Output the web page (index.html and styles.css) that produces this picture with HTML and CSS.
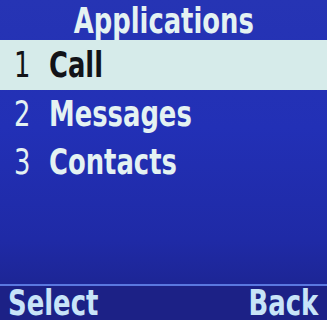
FILE: index.html
```html
<!DOCTYPE html>
<html>
<head>
<meta charset="utf-8">
<link rel="stylesheet" href="styles.css">
</head>
<body>
<div class="screen">
  <div class="title"><span class="txt">Applications</span></div>
  <ul class="menu">
    <li class="item selected"><span class="num">1</span><span class="label">Call</span></li>
    <li class="item"><span class="num">2</span><span class="label">Messages</span></li>
    <li class="item"><span class="num">3</span><span class="label">Contacts</span></li>
  </ul>
  <div class="spacer"></div>
  <div class="softkeys">
    <span class="key left">Select</span>
    <span class="key right">Back</span>
  </div>
</div>
</body>
</html>
```
FILE: styles.css
```css
html, body {
  margin: 0;
  padding: 0;
  width: 327px;
  height: 320px;
  overflow: hidden;
  background: #1f2aa6;
}
.screen {
  width: 327px;
  height: 320px;
  display: flex;
  flex-direction: column;
  background: linear-gradient(180deg, #2634b4 0%, #2230b6 40%, #1f2aa6 75%, #1b2288 100%);
  font-family: "DejaVu Sans Condensed", "DejaVu Sans", sans-serif;
  font-stretch: condensed;
  font-weight: bold;
  color: #e4f2f2;
}
.title {
  height: 40px;
  line-height: 40px;
  text-align: center;
  font-size: 35px;
  overflow: visible;
  white-space: nowrap;
}
.title .txt {
  display: inline-block;
  transform: scaleX(0.82);
  transform-origin: center;
  position: relative;
  top: 1px;
}
.menu {
  list-style: none;
  margin: 0;
  padding: 0;
}
.item {
  height: 48px;
  line-height: 48px;
  font-size: 35px;
  display: flex;
  align-items: center;
  padding-left: 14px;
  white-space: nowrap;
}
.item.selected {
  height: 50px;
  background: #d6ebea;
  color: #121318;
}
.num {
  width: 35px;
  font-weight: normal;
  display: inline-block;
  transform: scaleX(0.82);
  transform-origin: left;
}
.label {
  display: inline-block;
  transform: scaleX(0.82);
  transform-origin: left;
}
.spacer {
  flex: 1;
}
.softkeys {
  border-top: 2px solid #5a78e0;
  height: 34px;
  display: flex;
  justify-content: space-between;
  padding: 0 9px 0 8px;
  background: #1c2186;
  font-size: 36px;
  line-height: 34px;
  color: #c8e4f8;
  flex-shrink: 0;
  white-space: nowrap;
}
.key {
  display: inline-block;
  transform: scaleX(0.8);
}
.key.left { transform-origin: left; }
.key.right { transform-origin: right; }
```
